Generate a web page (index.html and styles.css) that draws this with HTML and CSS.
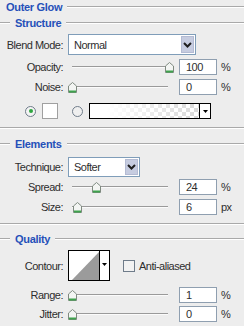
FILE: index.html
```html
<!DOCTYPE html>
<html lang="en">
<head>
    <meta charset="UTF-8">
    <title>Outer Glow</title>
    <link rel="stylesheet" href="styles.css">
</head>
<body>
    <div class="panel">
        <div class="title"><span>Outer Glow</span><i class="rule"></i></div>

        <div class="legend"><i class="rule lead"></i><span>Structure</span><i class="rule"></i></div>

        <div class="row r-blend">
            <span class="lbl">Blend Mode:</span>
            <div class="select blend">
                <span class="val">Normal</span>
                <span class="drop"><svg width="9" height="6" viewBox="0 0 9 6"><path d="M1 1 L4.5 4.5 L8 1" fill="none" stroke="#1e1e1e" stroke-width="2"/></svg></span>
            </div>
        </div>

        <div class="row r-slider">
            <span class="lbl">Opacity:</span>
            <div class="slider">
                <div class="track"></div>
                <svg class="thumb" style="left:97px" width="9" height="11" viewBox="0 0 9 11"><path d="M0.5 4 L4.5 0.5 L8.5 4 V10.5 H0.5 Z" fill="#f3f5f3" stroke="#7f8a80"/><rect x="1" y="8.5" width="7" height="2" fill="#3fa24d"/></svg>
            </div>
            <div class="num">100</div><span class="unit">%</span>
        </div>

        <div class="row r-slider">
            <span class="lbl">Noise:</span>
            <div class="slider">
                <div class="track"></div>
                <svg class="thumb" style="left:0px" width="9" height="11" viewBox="0 0 9 11"><path d="M0.5 4 L4.5 0.5 L8.5 4 V10.5 H0.5 Z" fill="#f3f5f3" stroke="#7f8a80"/><rect x="1" y="8.5" width="7" height="2" fill="#3fa24d"/></svg>
            </div>
            <div class="num">0</div><span class="unit">%</span>
        </div>

        <div class="row r-color">
            <span class="radio on"></span>
            <span class="swatch"></span>
            <span class="radio second"></span>
            <div class="gradbox">
                <span class="grad"></span>
                <span class="garrow"><svg width="5" height="3" viewBox="0 0 5 3"><path d="M0 0 H5 L2.5 3 Z" fill="#000"/></svg></span>
            </div>
        </div>

        <div class="sep"></div>

        <div class="legend l-elements"><i class="rule lead"></i><span>Elements</span><i class="rule"></i></div>

        <div class="row r-tech">
            <span class="lbl">Technique:</span>
            <div class="select tech">
                <span class="val">Softer</span>
                <span class="drop"><svg width="9" height="6" viewBox="0 0 9 6"><path d="M1 1 L4.5 4.5 L8 1" fill="none" stroke="#1e1e1e" stroke-width="2"/></svg></span>
            </div>
        </div>

        <div class="row r-slider r-spread">
            <span class="lbl">Spread:</span>
            <div class="slider">
                <div class="track"></div>
                <svg class="thumb" style="left:24px" width="9" height="11" viewBox="0 0 9 11"><path d="M0.5 4 L4.5 0.5 L8.5 4 V10.5 H0.5 Z" fill="#f3f5f3" stroke="#7f8a80"/><rect x="1" y="8.5" width="7" height="2" fill="#3fa24d"/></svg>
            </div>
            <div class="num">24</div><span class="unit">%</span>
        </div>

        <div class="row r-slider">
            <span class="lbl">Size:</span>
            <div class="slider">
                <div class="track"></div>
                <svg class="thumb" style="left:5px" width="9" height="11" viewBox="0 0 9 11"><path d="M0.5 4 L4.5 0.5 L8.5 4 V10.5 H0.5 Z" fill="#f3f5f3" stroke="#7f8a80"/><rect x="1" y="8.5" width="7" height="2" fill="#3fa24d"/></svg>
            </div>
            <div class="num">6</div><span class="unit">px</span>
        </div>

        <div class="sep"></div>

        <div class="legend l-quality"><i class="rule lead"></i><span>Quality</span><i class="rule"></i></div>

        <div class="row r-contour">
            <span class="lbl">Contour:</span>
            <div class="contour">
                <svg class="curve" width="30" height="29" viewBox="0 0 30 29"><polygon points="3,29 30,1 30,29" fill="#9b9b9b"/></svg>
                <span class="carrow"><svg width="5" height="3" viewBox="0 0 5 3"><path d="M0 0 H5 L2.5 3 Z" fill="#000"/></svg></span>
            </div>
            <span class="check"></span>
            <span class="check-lbl">Anti-aliased</span>
        </div>

        <div class="row r-slider r-range">
            <span class="lbl">Range:</span>
            <div class="slider">
                <div class="track"></div>
                <svg class="thumb" style="left:0px" width="9" height="11" viewBox="0 0 9 11"><path d="M0.5 4 L4.5 0.5 L8.5 4 V10.5 H0.5 Z" fill="#f3f5f3" stroke="#7f8a80"/><rect x="1" y="8.5" width="7" height="2" fill="#3fa24d"/></svg>
            </div>
            <div class="num">1</div><span class="unit">%</span>
        </div>

        <div class="row r-slider r-jitter">
            <span class="lbl">Jitter:</span>
            <div class="slider">
                <div class="track"></div>
                <svg class="thumb" style="left:0px" width="9" height="11" viewBox="0 0 9 11"><path d="M0.5 4 L4.5 0.5 L8.5 4 V10.5 H0.5 Z" fill="#f3f5f3" stroke="#7f8a80"/><rect x="1" y="8.5" width="7" height="2" fill="#3fa24d"/></svg>
            </div>
            <div class="num">0</div><span class="unit">%</span>
        </div>
    </div>
</body>
</html>
```

FILE: styles.css
```css
* {
    margin: 0;
    padding: 0;
    box-sizing: border-box;
}

body {
    width: 244px;
    height: 326px;
    overflow: hidden;
    background: #ededed;
    font-family: "Liberation Sans", Arial, sans-serif;
    font-size: 11px;
    letter-spacing: -0.5px;
    color: #2e2e2e;
}

/* headings with etched rules */
.title,
.legend {
    display: flex;
    align-items: center;
    height: 14px;
    font-weight: bold;
    letter-spacing: -0.3px;
    color: #2550b9;
}

.title {
    padding-left: 6px;
}

.title span,
.legend span {
    margin-right: 5px;
}

.legend {
    margin-top: 2px;
}

.rule {
    flex: 1;
    height: 2px;
    border-top: 1px solid #a9a9a9;
    border-bottom: 1px solid #fff;
}

.legend .lead {
    flex: 0 0 10px;
    margin-right: 5px;
}

.sep {
    height: 2px;
    margin-top: 8px;
    border-top: 1px solid #a9a9a9;
    border-bottom: 1px solid #fff;
}

.l-elements {
    margin-top: 8px;
}

.l-quality {
    margin-top: 7px;
}

/* rows */
.row {
    display: flex;
    align-items: center;
}

.lbl {
    width: 63px;
    margin-right: 5px;
    text-align: right;
    white-space: nowrap;
}

.r-blend {
    height: 21px;
    margin-top: 4px;
}

.r-slider {
    height: 16px;
    margin-top: 4px;
}

.r-spread {
    margin-top: 2px;
}

.r-range {
    margin-top: 6px;
}

.r-jitter {
    margin-top: 3px;
}

/* dropdowns */
.select {
    display: flex;
    align-items: stretch;
    height: 100%;
    background: #fff;
    border: 1px solid #7f9db9;
    padding: 1px;
}

.select .val {
    flex: 1;
    display: flex;
    align-items: center;
    padding-left: 4px;
}

.select .drop {
    width: 13px;
    display: flex;
    align-items: center;
    justify-content: center;
    background: #c6cce0;
    border: 1px solid #b4bbd3;
}

.blend {
    width: 128px;
}

.tech {
    width: 72px;
}

.r-tech {
    height: 20px;
    margin-top: 6px;
}

/* sliders */
.slider {
    position: relative;
    width: 104px;
    height: 16px;
    margin-right: 7px;
}

.track {
    position: absolute;
    left: 4px;
    right: 4px;
    top: 7px;
    height: 2px;
    border-top: 1px solid #9a9a9a;
    border-bottom: 1px solid #fbfbfb;
}

.thumb {
    position: absolute;
    top: 3px;
}

.num {
    width: 38px;
    height: 16px;
    padding-left: 6px;
    line-height: 14px;
    background: #fff;
    border: 1px solid #8f9fb0;
}

.unit {
    margin-left: 4px;
}

/* colour row */
.r-color {
    height: 16px;
    margin-top: 8px;
    padding-left: 25px;
}

.radio {
    width: 11px;
    height: 11px;
    border-radius: 50%;
    border: 1px solid #6f7c8a;
    background: #f4f4f4;
    display: flex;
    align-items: center;
    justify-content: center;
}

.radio.on::after {
    content: "";
    width: 4px;
    height: 4px;
    border-radius: 50%;
    background: #2fa640;
}

.radio.second {
    margin-left: 14px;
    background: #efefef;
}

.swatch {
    width: 16px;
    height: 16px;
    margin-left: 6px;
    background: #fff;
    border: 1px solid #a0a0a0;
}

.gradbox {
    display: flex;
    width: 122px;
    height: 16px;
    margin-left: 6px;
    border: 1px solid #000;
    background: #fff;
}

.grad {
    flex: 1;
    background:
        linear-gradient(to right, #fff 15%, rgba(255, 255, 255, 0.1) 100%),
        conic-gradient(#d4d4d4 25%, #fff 0 50%, #d4d4d4 0 75%, #fff 0) 0 0 / 8px 8px;
}

.garrow {
    width: 11px;
    display: flex;
    align-items: center;
    justify-content: center;
    border-left: 1px solid #000;
    background: #fff;
}

/* contour row */
.r-contour {
    height: 31px;
    margin-top: 4px;
}

.contour {
    display: flex;
    width: 42px;
    height: 31px;
    border: 1px solid #000;
    background: #fff;
}

.curve {
    display: block;
    width: 30px;
    height: 29px;
}

.carrow {
    width: 10px;
    display: flex;
    align-items: center;
    justify-content: center;
    border-left: 1px solid #000;
    padding-bottom: 2px;
}

.check {
    width: 12px;
    height: 12px;
    margin-left: 13px;
    border: 1px solid #6f7c8a;
    background: #f2f2f2;
}

.check-lbl {
    margin-left: 4px;
}
```
